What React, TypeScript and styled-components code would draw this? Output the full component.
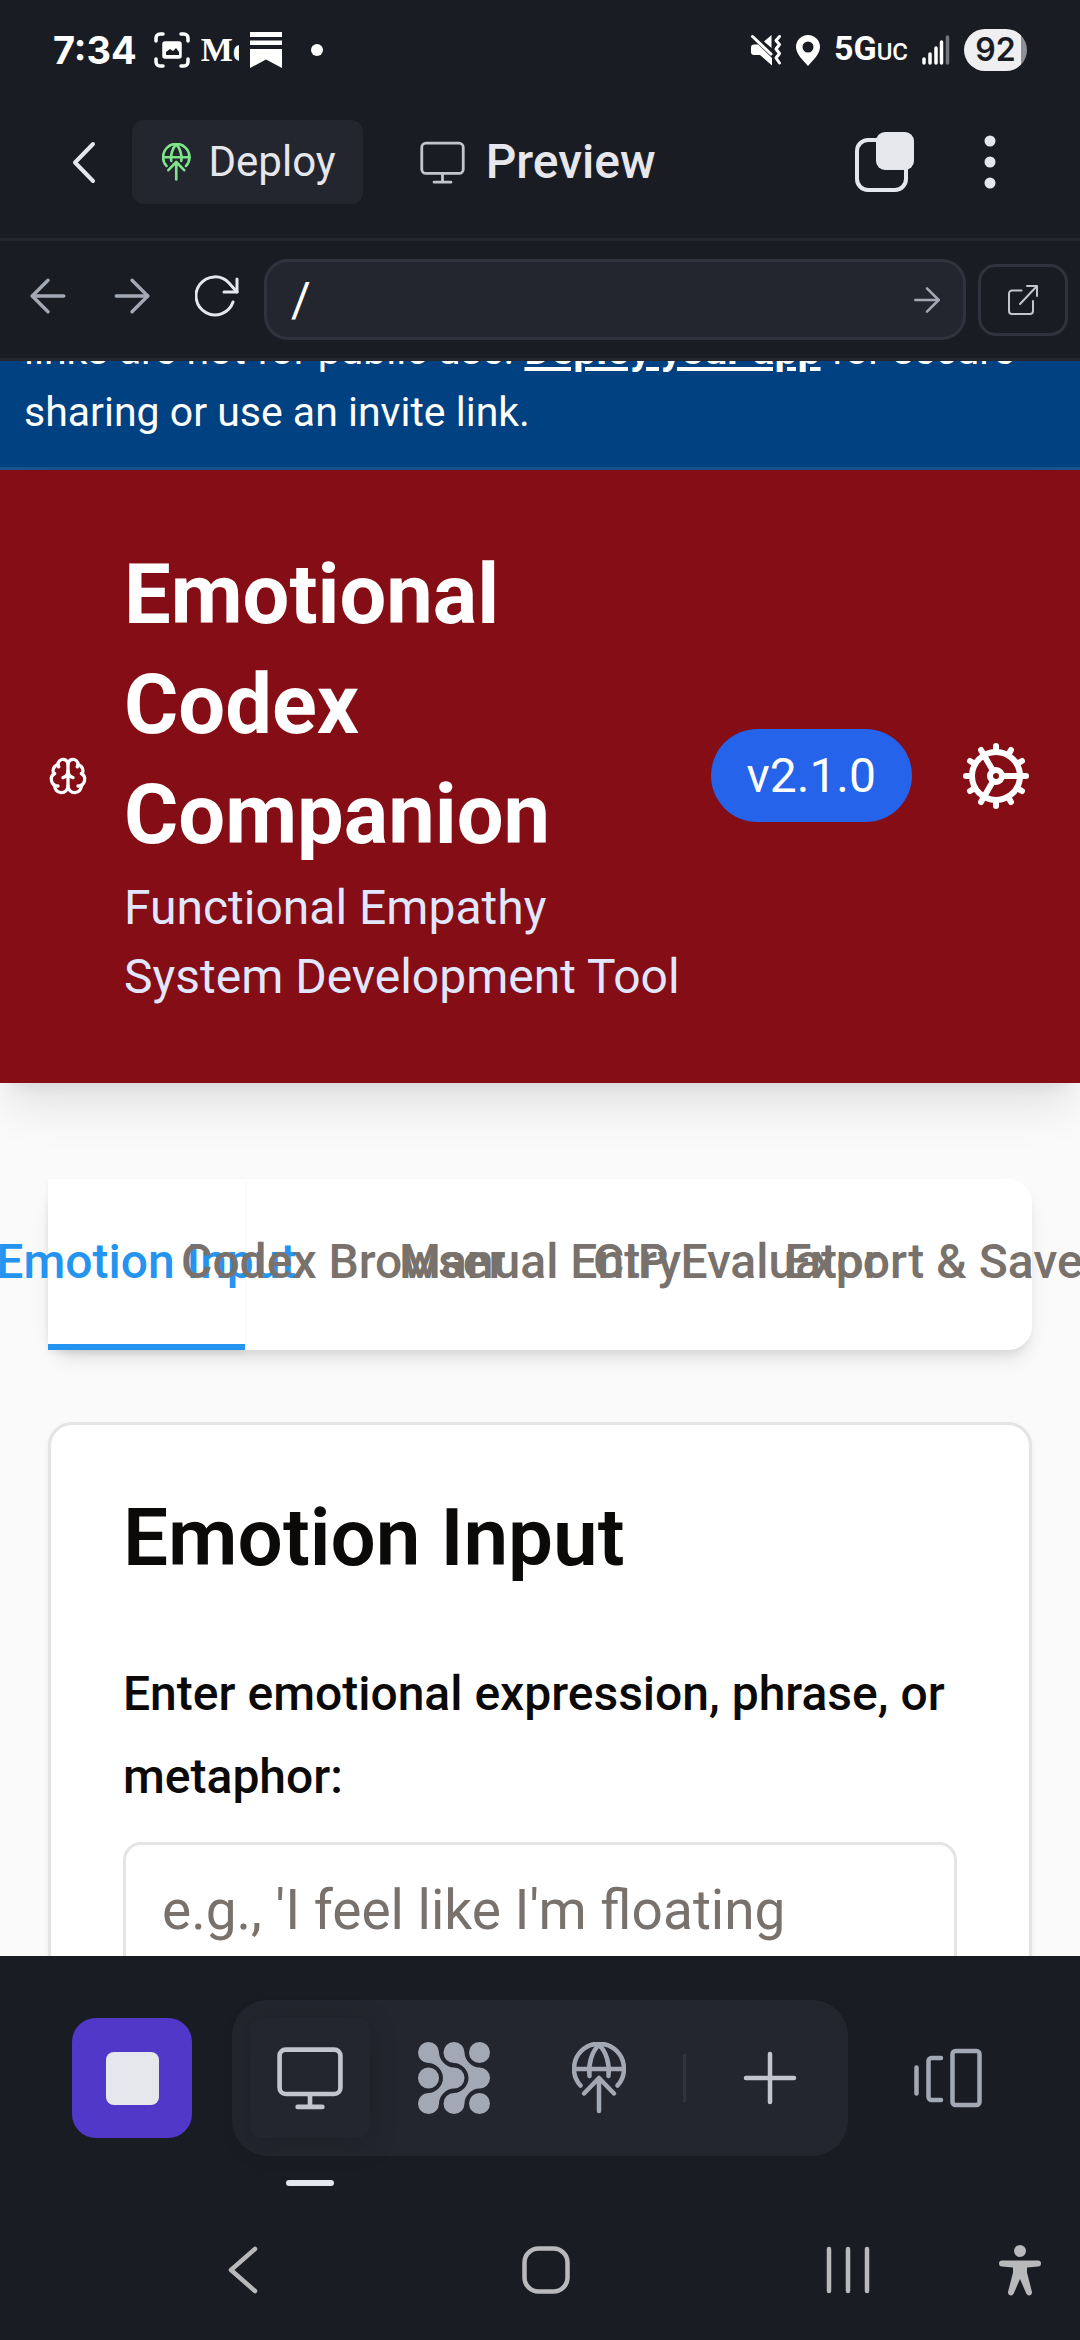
import React from "react";
import styled, { createGlobalStyle, css } from "styled-components";
import { ArrowLeft, ArrowRight, Brain, Cog } from "lucide-react";

const Global = createGlobalStyle`
  *, *::before, *::after { box-sizing: border-box; }
  html, body { margin: 0; padding: 0; background: #1a1c24; }
  body { font-family: Roboto, "Liberation Sans", sans-serif; }
  button, input, textarea { font: inherit; color: inherit; }
  button { border: 0; padding: 0; background: none; cursor: pointer; }
  svg { display: block; flex: none; }
  h1, h2, p { margin: 0; }
`;

const Screen = styled.div`
  display: flex;
  flex-direction: column;
  height: 100vh;
  overflow: hidden;
  background: #1a1c24;
  color: #e6e7ed;
`;

/* ---------- phone status bar ---------- */

const StatusBar = styled.div`
  display: flex;
  align-items: center;
  justify-content: space-between;
  flex: none;
  height: 86px;
  padding: 14px 53px 0 53px;
  color: #fff;
`;

const StatusGroup = styled.div<{ $gap: number }>`
  display: flex;
  align-items: center;
  gap: ${(p) => p.$gap}px;
`;

const Clock = styled.span`
  margin-right: 6px;
  font-family: Inter, Roboto, sans-serif;
  font-size: 38px;
  line-height: 44px;
  font-weight: 700;
`;

const NewsBadge = styled.span`
  width: 38px;
  overflow: hidden;
  white-space: nowrap;
  font-family: "Liberation Serif", serif;
  font-size: 34px;
  line-height: 44px;
  font-weight: 700;
`;

const Network = styled.span`
  display: flex;
  align-items: baseline;
  font-size: 34px;
  line-height: 44px;
  font-weight: 700;
`;

const NetworkSuffix = styled.small`
  font-size: 24px;
  font-weight: 500;
`;

const Battery = styled.span`
  display: flex;
  align-items: center;
  justify-content: center;
  width: 63px;
  height: 42px;
  border-radius: 21px;
  background: linear-gradient(90deg, #efeff1 91%, #8f9095 91%);
  color: #1a1c24;
  font-family: Inter, Roboto, sans-serif;
  font-size: 32px;
  line-height: 42px;
  font-weight: 600;
`;

/* ---------- app bar ---------- */

const AppBar = styled.header`
  display: flex;
  align-items: center;
  flex: none;
  height: 152px;
  padding: 0 27px 0 36px;
`;

const IconButton = styled.button<{ $w: number; $h?: number }>`
  display: flex;
  align-items: center;
  justify-content: center;
  flex: none;
  width: ${(p) => p.$w}px;
  height: ${(p) => p.$h ?? 84}px;
`;

const DeployButton = styled.button`
  display: flex;
  align-items: center;
  gap: 18px;
  height: 84px;
  padding: 0 27px 0 30px;
  border-radius: 12px;
  background: #24262f;
  font-size: 42px;
  line-height: 54px;
`;

const DeployMark = styled.span`
  display: flex;
  color: #7ee58a;
`;

const PageTitle = styled.div`
  display: flex;
  align-items: center;
  flex: 1;
  gap: 21px;
  padding-left: 57px;
  font-size: 48px;
  line-height: 60px;
  font-weight: 500;
`;

/* ---------- address bar ---------- */

const AddressBar = styled.form`
  display: flex;
  align-items: center;
  flex: none;
  height: 123px;
  padding-right: 12px;
  border-top: 3px solid #24262f;
  border-bottom: 3px solid #24262f;
`;

const History = styled.div`
  display: flex;
  padding: 0 5px 8px 6px;
`;

const AddressField = styled.div`
  display: flex;
  align-items: center;
  flex: 1;
  min-width: 0;
  height: 81px;
  margin-right: 12px;
  padding: 0 12px 0 24px;
  border: 3px solid #30323d;
  border-radius: 24px;
  background: #24262f;
`;

const AddressInput = styled.input`
  flex: 1;
  min-width: 0;
  padding: 0;
  border: 0;
  outline: 0;
  background: none;
  color: #fff;
  font-size: 48px;
  line-height: 60px;
`;

const OpenButton = styled(IconButton)`
  border: 3px solid #30323d;
  border-radius: 18px;
  color: #c2c5ce;
`;

/* ---------- previewed page ---------- */

const Viewport = styled.main`
  display: flex;
  flex-direction: column;
  flex: 1;
  min-height: 0;
  overflow: hidden;
  background: #fafafa;
  color: #0c0a09;
`;

const Notice = styled.div`
  display: flex;
  align-items: flex-end;
  flex: none;
  height: 109px;
  padding: 0 24px 24px;
  overflow: hidden;
  border-bottom: 3px solid #1c5189;
  background: #004182;
  color: #fff;
  font-size: 41px;
  line-height: 62px;
`;

const NoticeLink = styled.a`
  color: inherit;
  font-weight: 700;
  text-decoration: underline;
`;

const Hero = styled.header`
  display: flex;
  align-items: center;
  flex: none;
  padding: 70px 48px 72px;
  background: #850d15;
  color: #fff;
  box-shadow: 0 30px 45px -9px rgba(0, 0, 0, 0.1), 0 12px 18px -12px rgba(0, 0, 0, 0.1);
`;

const HeroText = styled.div`
  display: flex;
  flex-direction: column;
  flex: 1;
  gap: 3px;
  min-width: 0;
  padding: 0 24px 0 36px;
`;

const HeroTitle = styled.h1`
  font-size: 83px;
  line-height: 110px;
  font-weight: 700;
`;

const HeroSubtitle = styled.p`
  color: #e0e7ff;
  font-size: 48px;
  line-height: 69px;
`;

const Version = styled.span`
  flex: none;
  margin-right: 48px;
  padding: 12px 36px;
  border-radius: 48px;
  background: #2563eb;
  font-size: 48px;
  line-height: 69px;
`;

const Body = styled.div`
  display: flex;
  flex-direction: column;
  gap: 72px;
  padding: 96px 48px;
`;

const TabList = styled.div`
  display: grid;
  grid-template-columns: repeat(5, minmax(0, 1fr));
  height: 171px;
  border-radius: 24px;
  background: #fff;
  box-shadow: 0 12px 18px -3px rgba(0, 0, 0, 0.1), 0 6px 12px -6px rgba(0, 0, 0, 0.1);
`;

const Tab = styled.button<{ $active: boolean }>`
  display: flex;
  align-items: center;
  justify-content: center;
  border-bottom: 6px solid transparent;
  color: #78716c;
  font-size: 48px;
  line-height: 69px;
  font-weight: 500;
  white-space: nowrap;
  ${(p) =>
    p.$active &&
    css`
      border-color: #2593f0;
      background: #fff;
      color: #2593f0;
      box-shadow: 0 3px 6px rgba(0, 0, 0, 0.05);
    `}
`;

const Card = styled.section`
  display: flex;
  flex-direction: column;
  padding: 72px;
  border: 3px solid #e5e4e3;
  border-radius: 24px;
  background: #fff;
  box-shadow: 0 3px 6px rgba(0, 0, 0, 0.05);
`;

const CardTitle = styled.h2`
  margin-bottom: 72px;
  font-size: 80px;
  line-height: 83px;
  font-weight: 600;
`;

const FieldLabel = styled.label`
  margin-bottom: 24px;
  font-size: 48px;
  line-height: 83px;
  font-weight: 500;
`;

const Field = styled.textarea`
  display: block;
  width: 100%;
  height: 288px;
  padding: 24px 36px;
  border: 3px solid #e5e4e3;
  border-radius: 18px;
  outline: 0;
  resize: none;
  background: #fff;
  font-size: 55px;
  line-height: 83px;
  &::placeholder {
    color: #78716c;
    opacity: 1;
  }
`;

/* ---------- dock and phone navigation ---------- */

const Dock = styled.nav`
  display: flex;
  align-items: center;
  flex: none;
  gap: 40px;
  padding: 44px 72px;
  color: #a3a9b4;
`;

const DockButton = styled.button<{ $primary?: boolean; $active?: boolean }>`
  position: relative;
  display: flex;
  align-items: center;
  justify-content: center;
  flex: none;
  width: 120px;
  height: 120px;
  border-radius: ${(p) => (p.$primary ? 24 : 12)}px;
  background: ${(p) => (p.$primary ? "#5138c9" : "transparent")};
  ${(p) =>
    p.$active &&
    css`
      background: #24262f;
      box-shadow: 0 6px 24px rgba(20, 20, 28, 0.35);
      &::after {
        content: "";
        position: absolute;
        left: 36px;
        right: 36px;
        bottom: -48px;
        height: 6px;
        border-radius: 3px;
        background: #e6e7ed;
      }
    `}
`;

const StopMark = styled.span`
  width: 53px;
  height: 53px;
  border-radius: 8px;
  background: #e6e7ed;
`;

const DockGroup = styled.div`
  display: flex;
  align-items: center;
  justify-content: space-between;
  flex: 1;
  padding: 18px;
  border-radius: 36px;
  background: #24262f;
`;

const DockDivider = styled.span`
  width: 3px;
  height: 48px;
  background: #30323d;
`;

const PhoneNav = styled.nav`
  display: flex;
  align-items: center;
  flex: none;
  height: 140px;
  padding-right: 18px;
  color: #b9b9bc;
`;

const PhoneKeys = styled.div`
  display: flex;
  justify-content: space-between;
  flex: 1;
  margin-right: 82px;
  padding-left: 195px;
`;

/* ---------- drawings ---------- */

const Stroke = (p: React.SVGProps<SVGSVGElement>) => (
  <svg fill="none" stroke="currentColor" strokeLinecap="round" strokeLinejoin="round" aria-hidden="true" {...p} />
);

const ChevronIcon = ({ w, h, sw }: { w: number; h: number; sw: number }) => (
  <Stroke width={w} height={h} viewBox={`0 0 ${w} ${h}`} strokeWidth={sw}>
    <path d={`M${w - 3} 3 L3 ${h / 2} L${w - 3} ${h - 3}`} />
  </Stroke>
);

const MonitorIcon = ({ w, sw, color }: { w: number; sw: number; color: string }) => (
  <Stroke width={w} height={w} viewBox="0 0 64 64" strokeWidth={sw} color={color}>
    <rect x="2.5" y="4.5" width="59" height="43" rx="6" />
    <path d="M32 48v12M20 60h24" />
  </Stroke>
);

const GlobeUpIcon = ({ h, sw }: { h: number; sw: number }) => (
  <Stroke width={(h * 54) / 72} height={h} viewBox="0 0 54 72" strokeWidth={sw}>
    <path d="M8.5 43.5A25 25 0 1 1 45.5 43.5" />
    <path d="M2.5 27h49" />
    <path d="M17.5 34C16 22 20 9 27 3C34 9 38 22 36.5 34" />
    <path d="M27 69V36M12 51.5L27 36L42 51.5" />
  </Stroke>
);

const ShotIcon = () => (
  <Stroke width="36" height="36" viewBox="0 0 36 36" strokeWidth="3.5">
    <path d="M2 9V6a4 4 0 0 1 4-4h3M27 2h3a4 4 0 0 1 4 4v3M34 27v3a4 4 0 0 1-4 4h-3M9 34H6a4 4 0 0 1-4-4v-3" />
    <rect x="9" y="10" width="18" height="16" rx="2" fill="#fff" strokeWidth="1.5" />
    <path d="M12 23v-3l4-3 3 2 3-3 3 4v3z" fill="#1a1c24" stroke="none" />
  </Stroke>
);

const RibbonIcon = () => (
  <svg width="32" height="36" viewBox="0 0 32 36" fill="#fff" aria-hidden="true">
    <path d="M0 0h32v5H0zM0 8.500h32v4.500H0zM0 17h32v19L16 27.500 0 36z" />
  </svg>
);

const MutedIcon = () => (
  <Stroke width="32" height="32" viewBox="0 0 32 32">
    <path
      d="M21.500 1v13L14 7.500zM4 10.500h4L22 24v7.500L10 21H4a3 3 0 0 1-3-3v-4.500a3 3 0 0 1 3-3z"
      fill="#fff"
      stroke="none"
    />
    <path d="M2.500 2.500L21 20" strokeWidth="3" />
    <path d="M29.500 2.500l-3.500 4 3.500 4-3.500 4.500 3.500 4.500-3.500 4.500 3.500 5" strokeWidth="3" />
  </Stroke>
);

const PinIcon = () => (
  <svg width="24" height="31" viewBox="0 0 24 31" fill="#fff" aria-hidden="true">
    <path
      fillRule="evenodd"
      d="M12 0a12 12 0 0 1 12 12c0 7-7 13-12 19C7 25 0 19 0 12A12 12 0 0 1 12 0zm0 6.500a5.500 5.500 0 1 0 0 11 5.500 5.500 0 0 0 0-11z"
    />
  </svg>
);

const SignalIcon = () => (
  <Stroke width="28" height="30" viewBox="0 0 28 30" strokeWidth="3.5">
    <path d="M2 24v4M8 19v9M14 13v15M19.500 7v21" />
    <path d="M25.500 2v26" opacity="0.4" />
  </Stroke>
);

const WindowsIcon = () => (
  <svg width="60" height="60" viewBox="0 0 60 60" fill="none" aria-hidden="true">
    <rect x="2" y="8" width="49" height="50" rx="11" stroke="#e6e7ed" strokeWidth="4" />
    <rect x="21" y="0" width="38" height="38" rx="9" fill="#e6e7ed" />
  </svg>
);

const DotsIcon = () => (
  <svg width="12" height="54" viewBox="0 0 12 54" fill="#e6e7ed" aria-hidden="true">
    <circle cx="6" cy="6" r="5.5" />
    <circle cx="6" cy="27" r="5.5" />
    <circle cx="6" cy="48" r="5.5" />
  </svg>
);

const ReloadIcon = () => (
  <Stroke width="44" height="42" viewBox="0 0 44 42" strokeWidth="3">
    <path d="M38 27A19 19 0 1 1 34 8L42 17" />
    <path d="M42 4v13H29" />
  </Stroke>
);

const OpenIcon = () => (
  <Stroke width="32" height="32" viewBox="0 0 32 32" strokeWidth="2">
    <path d="M14.500 6.500H5a3 3 0 0 0-3 3V27a3 3 0 0 0 3 3h18a3 3 0 0 0 3-3V17" />
    <path d="M20 2h10v10M30 2L13 20" />
  </Stroke>
);

const AgentIcon = () => (
  <svg width="72" height="72" viewBox="0 0 72 72" fill="currentColor" aria-hidden="true">
    <path d="M10.500 0A10.500 10.500 0 0 1 21 10.500C21 18 28 25.500 36 25.500A10.500 10.500 0 0 1 36 46.500C28 46.500 21 54 21 61.500A10.500 10.500 0 1 1 10.500 51C18 51 25 44 25 36S18 21 10.500 21A10.500 10.500 0 0 1 10.500 0z" />
    <path d="M36 0A10.500 10.500 0 0 1 46.500 10.500C46.500 18 53.500 25.500 61.500 25.500A10.500 10.500 0 0 1 61.500 46.500C53.500 46.500 46.500 54 46.500 61.500A10.500 10.500 0 1 1 36 51C43.500 51 50.500 44 50.500 36S43.500 21 36 21A10.500 10.500 0 0 1 36 0z" />
    <circle cx="61.5" cy="10.5" r="10.5" />
    <circle cx="10.5" cy="36" r="10.5" />
    <circle cx="61.5" cy="61.5" r="10.5" />
  </svg>
);

const PlusIcon = () => (
  <Stroke width="54" height="54" viewBox="0 0 54 54" strokeWidth="4.5" color="#c2c5ce">
    <path d="M27 3v48M3 27h48" />
  </Stroke>
);

const PanelsIcon = () => (
  <Stroke width="68" height="60" viewBox="0 0 68 60" strokeWidth="4.5">
    <path d="M2.500 19.500v26M27 10H17.500a3 3 0 0 0-3 3v36a3 3 0 0 0 3 3H27" />
    <rect x="38.5" y="3" width="27" height="54" rx="3" />
  </Stroke>
);

const HomeIcon = () => (
  <Stroke width="48" height="48" viewBox="0 0 48 48" strokeWidth="4.5">
    <rect x="2.5" y="2.5" width="43" height="43" rx="14" />
  </Stroke>
);

const RecentsIcon = () => (
  <Stroke width="44" height="48" viewBox="0 0 44 48" strokeWidth="4.5">
    <path d="M3 3v42M22 3v42M41 3v42" />
  </Stroke>
);

const PersonIcon = () => (
  <svg width="42" height="51" viewBox="0 0 42 51" fill="currentColor" aria-hidden="true">
    <circle cx="21" cy="6" r="6" />
    <path d="M3 15.500h36a3 3 0 0 1 0 6l-11 1v5l5 19.500a3 3 0 0 1-5.500 2L21 34l-6.500 15a3 3 0 0 1-5.500-2l5-19.500v-5l-11-1a3 3 0 0 1 0-6z" />
  </svg>
);

const tabs = ["Emotion Input", "Codex Browser", "Manual Entry", "CIP Evaluator", "Export & Save"];

export default function App() {
  return (
    <Screen>
      <Global />
      <StatusBar>
        <StatusGroup $gap={11}>
          <Clock>7:34</Clock>
          <ShotIcon />
          <NewsBadge>Me</NewsBadge>
          <RibbonIcon />
          <svg width="60" height="12" viewBox="0 0 60 12" fill="#fff" aria-hidden="true">
            <circle cx="24" cy="6" r="6" />
          </svg>
        </StatusGroup>
        <StatusGroup $gap={14}>
          <MutedIcon />
          <PinIcon />
          <Network>
            5G<NetworkSuffix>UC</NetworkSuffix>
          </Network>
          <SignalIcon />
          <Battery>92</Battery>
        </StatusGroup>
      </StatusBar>

      <AppBar>
        <IconButton $w={96} type="button" aria-label="Back">
          <ChevronIcon w={24} h={43} sw={4} />
        </IconButton>
        <DeployButton type="button">
          <DeployMark>
            <GlobeUpIcon h={38} sw={5} />
          </DeployMark>
          Deploy
        </DeployButton>
        <PageTitle>
          <MonitorIcon w={45} sw={4} color="#c2c5ce" />
          Preview
        </PageTitle>
        <IconButton $w={84} type="button" aria-label="Tabs">
          <WindowsIcon />
        </IconButton>
        <IconButton $w={126} type="button" aria-label="More">
          <DotsIcon />
        </IconButton>
      </AppBar>

      <AddressBar onSubmit={(e) => e.preventDefault()}>
        <History>
          <IconButton $w={84} type="button" aria-label="Go back">
            <ArrowLeft size={54} strokeWidth={1.5} color="#a3a9b4" />
          </IconButton>
          <IconButton $w={84} type="button" aria-label="Go forward">
            <ArrowRight size={54} strokeWidth={1.5} color="#a3a9b4" />
          </IconButton>
          <IconButton $w={85} type="button" aria-label="Reload">
            <ReloadIcon />
          </IconButton>
        </History>
        <AddressField>
          <AddressInput aria-label="Path" defaultValue="/" />
          <IconButton $w={48} $h={72} type="submit" aria-label="Go">
            <ArrowRight size={40} strokeWidth={1.5} color="#a3a9b4" />
          </IconButton>
        </AddressField>
        <OpenButton $w={90} $h={72} type="button" aria-label="Open in new tab">
          <OpenIcon />
        </OpenButton>
      </AddressBar>

      <Viewport>
        <Notice>
          <p>
            links are not for public use. <NoticeLink href="#deploy">Deploy your app</NoticeLink> for secure sharing or
            use an invite link.
          </p>
        </Notice>
        <Hero>
          <Brain size={40} strokeWidth={2} aria-hidden="true" />
          <HeroText>
            <HeroTitle>Emotional Codex Companion</HeroTitle>
            <HeroSubtitle>Functional Empathy System Development Tool</HeroSubtitle>
          </HeroText>
          <Version>v2.1.0</Version>
          <IconButton $w={72} $h={72} type="button" aria-label="Settings">
            <Cog size={72} strokeWidth={2} />
          </IconButton>
        </Hero>
        <Body>
          <TabList role="tablist">
            {tabs.map((name, i) => (
              <Tab key={name} type="button" role="tab" aria-selected={i === 0} $active={i === 0}>
                {name}
              </Tab>
            ))}
          </TabList>
          <Card>
            <CardTitle>Emotion Input</CardTitle>
            <FieldLabel htmlFor="expression">Enter emotional expression, phrase, or metaphor:</FieldLabel>
            <Field id="expression" placeholder="e.g., 'I feel like I'm floating" />
          </Card>
        </Body>
      </Viewport>

      <Dock>
        <DockButton $primary type="button" aria-label="Stop">
          <StopMark />
        </DockButton>
        <DockGroup>
          <DockButton $active type="button" aria-label="Preview">
            <MonitorIcon w={66} sw={4.5} color="#c2c5ce" />
          </DockButton>
          <DockButton type="button" aria-label="Agent">
            <AgentIcon />
          </DockButton>
          <DockButton type="button" aria-label="Deployments">
            <GlobeUpIcon h={72} sw={4.5} />
          </DockButton>
          <DockDivider />
          <DockButton type="button" aria-label="New tab">
            <PlusIcon />
          </DockButton>
        </DockGroup>
        <DockButton type="button" aria-label="All tabs">
          <PanelsIcon />
        </DockButton>
      </Dock>
      <PhoneNav>
        <PhoneKeys>
          <IconButton $w={96} type="button" aria-label="System back">
            <ChevronIcon w={30} h={48} sw={4.5} />
          </IconButton>
          <IconButton $w={96} type="button" aria-label="Home">
            <HomeIcon />
          </IconButton>
          <IconButton $w={96} type="button" aria-label="Recent apps">
            <RecentsIcon />
          </IconButton>
        </PhoneKeys>
        <IconButton $w={84} type="button" aria-label="Accessibility">
          <PersonIcon />
        </IconButton>
      </PhoneNav>
    </Screen>
  );
}
